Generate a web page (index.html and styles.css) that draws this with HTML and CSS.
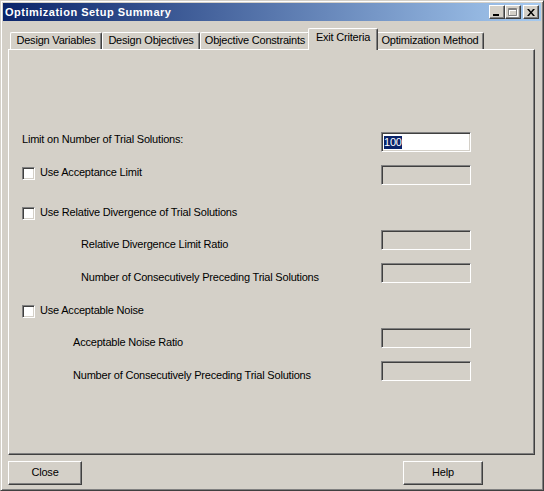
FILE: index.html
```html
<!DOCTYPE html>
<html>
<head>
<meta charset="utf-8">
<link rel="stylesheet" href="styles.css">
</head>
<body>
<div class="window">
  <div class="titlebar">
    <span class="title">Optimization Setup Summary</span>
    <div class="ctrls">
      <div class="cbtn"><svg width="8" height="7" viewBox="0 0 8 7"><rect x="0" y="5" width="6" height="2" fill="#000"/></svg></div>
      <div class="cbtn"><svg width="10" height="9" viewBox="0 0 10 9"><path d="M1 1h8v7h-8zM1 2h8" fill="none" stroke="#fff" stroke-width="1" transform="translate(0.5 0.5)"/><path d="M0 0h8v7h-8zM0 1h8" fill="none" stroke="#808080" stroke-width="1" transform="translate(0.5 0.5)"/></svg></div>
      <div class="cbtn close"><svg width="8" height="7" viewBox="0 0 8 7"><path d="M0 0h2l2 2.5 2-2.5h2l-3 3.5 3 3.5h-2l-2-2.5-2 2.5h-2l3-3.5z" fill="#000"/></svg></div>
    </div>
  </div>
  <div class="tabs">
    <div class="tab t1">Design Variables</div>
    <div class="tab t2">Design Objectives</div>
    <div class="tab t3">Objective Constraints</div>
    <div class="tab sel">Exit Criteria</div>
    <div class="tab t5">Optimization Method</div>
  </div>
  <div class="panel">
    <div class="row">
      <span class="label">Limit on Number of Trial Solutions:</span>
      <div class="field active"><span class="sel-text">100</span></div>
    </div>
    <div class="row">
      <span class="label check"><span class="box"></span>Use Acceptance Limit</span>
      <div class="field"></div>
    </div>
    <div class="row gap-lg">
      <span class="label check"><span class="box"></span>Use Relative Divergence of Trial Solutions</span>
    </div>
    <div class="row gap-sm">
      <span class="label low ind1">Relative Divergence Limit Ratio</span>
      <div class="field"></div>
    </div>
    <div class="row">
      <span class="label low ind1">Number of Consecutively Preceding Trial Solutions</span>
      <div class="field"></div>
    </div>
    <div class="row gap-lg">
      <span class="label check"><span class="box"></span>Use Acceptable Noise</span>
    </div>
    <div class="row gap-sm">
      <span class="label low ind2">Acceptable Noise Ratio</span>
      <div class="field"></div>
    </div>
    <div class="row">
      <span class="label low ind2">Number of Consecutively Preceding Trial Solutions</span>
      <div class="field"></div>
    </div>
  </div>
  <div class="footer">
    <div class="btn close-btn">Close</div>
    <div class="btn help-btn">Help</div>
  </div>
</div>
</body>
</html>
```

FILE: styles.css
```css
html, body {
  margin: 0;
  padding: 0;
  background: #d4d0c8;
}
body {
  font-family: "Liberation Sans", Arial, sans-serif;
  font-size: 11px;
  letter-spacing: -0.2px;
  color: #000;
}
.window {
  box-sizing: border-box;
  width: 544px;
  height: 491px;
  background: #d4d0c8;
  border: 1px solid;
  border-color: #d4d0c8 #404040 #404040 #d4d0c8;
  box-shadow: inset 1px 1px #fff, inset -1px -1px #808080;
  padding: 2px;
  display: flex;
  flex-direction: column;
}
.titlebar {
  height: 18px;
  flex: none;
  background: linear-gradient(to right, #0a246a, #a6caf0);
  display: flex;
  align-items: center;
  padding-left: 2px;
  padding-right: 2px;
}
.title {
  color: #fff;
  font-weight: bold;
  font-size: 11px;
  flex: 1;
  letter-spacing: 0.5px;
}
.ctrls {
  display: flex;
  align-items: center;
}
.cbtn {
  box-sizing: border-box;
  width: 16px;
  height: 14px;
  background: #d4d0c8;
  border: 1px solid;
  border-color: #fff #404040 #404040 #fff;
  box-shadow: inset -1px -1px #808080;
  display: flex;
  align-items: center;
  justify-content: center;
}
.cbtn.close {
  margin-left: 2px;
}
.tabs {
  flex: none;
  height: 21px;
  margin-top: 7px;
  padding-left: 7px;
  display: flex;
  align-items: flex-end;
}
.tab {
  box-sizing: border-box;
  height: 17px;
  background: #d4d0c8;
  border-top: 1px solid #fff;
  border-left: 1px solid #fff;
  border-right: 1px solid #404040;
  box-shadow: inset -1px 0 #808080;
  border-radius: 2px 2px 0 0;
  text-align: center;
  line-height: 15px;
  white-space: nowrap;
}
.t1 { width: 92px; }
.t2 { width: 98px; }
.t3 { width: 110px; }
.t5 { width: 108px; }
.tab.sel {
  width: 70px;
  height: 22px;
  margin: 0 -2px -1px -2px;
  position: relative;
  z-index: 1;
  line-height: 17px;
}
.panel {
  box-sizing: border-box;
  flex: none;
  width: 527px;
  height: 406px;
  margin-left: 5px;
  border: 1px solid;
  border-color: #fff #404040 #404040 #fff;
  box-shadow: inset -1px -1px #808080;
  padding-top: 82px;
  padding-left: 13px;
  display: flex;
  flex-direction: column;
}
.row {
  display: grid;
  grid-template-columns: 359px 90px;
  height: 20px;
  margin-top: 13px;
}
.row:first-child { margin-top: 0; }
.row.gap-lg { margin-top: 20px; }
.row.gap-sm { margin-top: 5px; }
.label {
  line-height: 13px;
  padding-top: 1px;
  white-space: nowrap;
}
.label.low { padding-top: 8px; }
.label.ind1 { padding-left: 59px; }
.label.ind2 { padding-left: 51px; }
.label.check {
  display: flex;
  align-items: flex-start;
}
.box {
  box-sizing: border-box;
  width: 13px;
  height: 13px;
  margin-top: 1px;
  margin-right: 5px;
  background: #fff;
  border: 1px solid;
  border-color: #808080 #fff #fff #808080;
  box-shadow: inset 1px 1px #404040, inset -1px -1px #d4d0c8;
  flex: none;
}
.field {
  box-sizing: border-box;
  width: 90px;
  height: 20px;
  background: #d4d0c8;
  border: 1px solid;
  border-color: #808080 #fff #fff #808080;
  box-shadow: inset 1px 1px #404040, inset -1px -1px #d4d0c8;
  padding: 3px 2px 0 2px;
  line-height: 13px;
}
.field.active {
  background: #fff;
}
.sel-text {
  background: #0a246a;
  color: #fff;
  display: inline-block;
  line-height: 13px;
}
.footer {
  flex: none;
  display: flex;
  margin-top: 6px;
  padding-left: 5px;
  padding-right: 58px;
}
.btn {
  box-sizing: border-box;
  height: 24px;
  border: 1px solid;
  border-color: #fff #404040 #404040 #fff;
  box-shadow: inset -1px -1px #808080;
  text-align: center;
  line-height: 21px;
}
.close-btn { width: 74px; }
.help-btn { width: 80px; margin-left: auto; }
```
